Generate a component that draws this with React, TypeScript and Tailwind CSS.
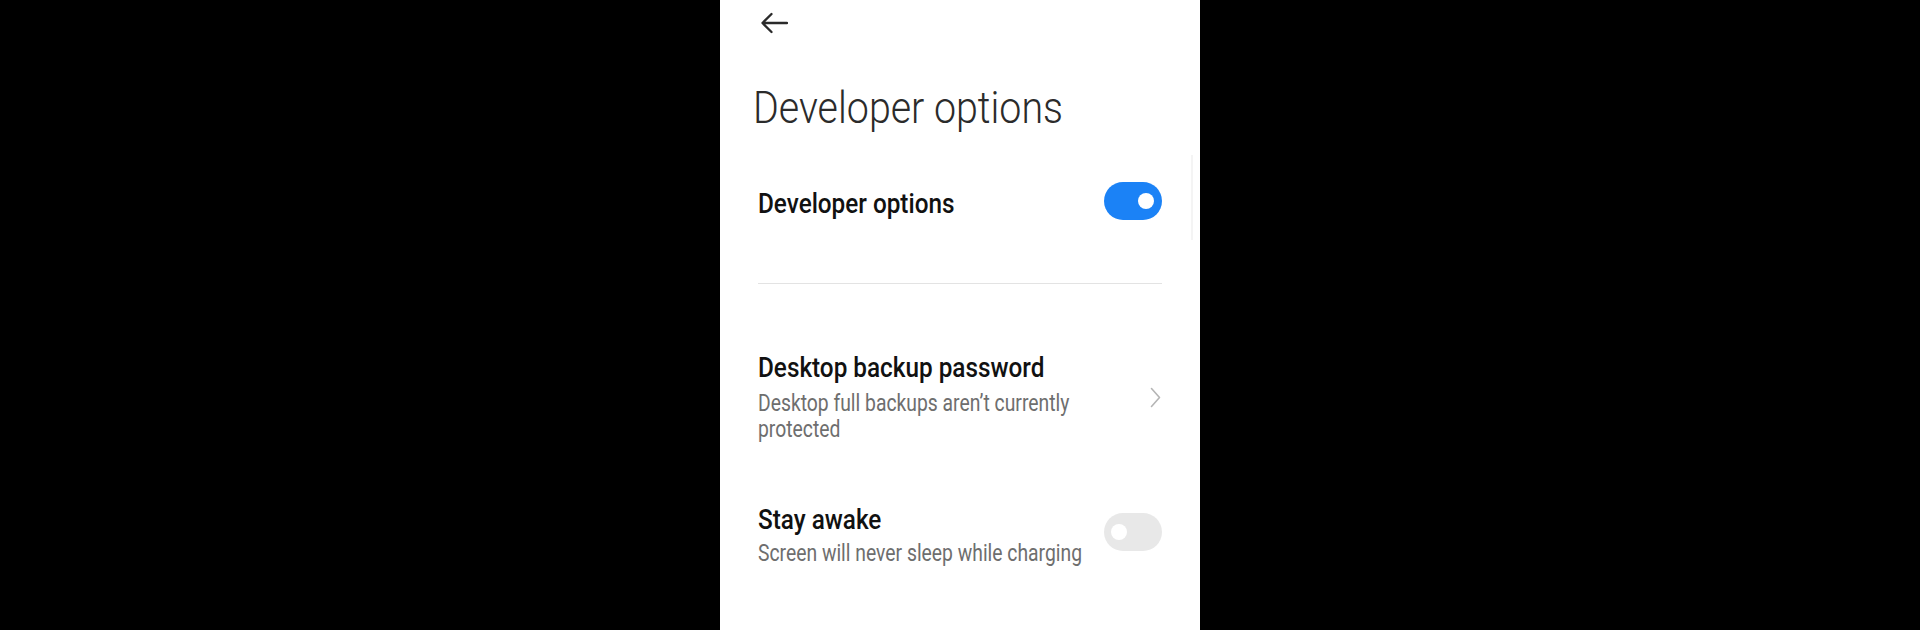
import React from 'react'

const FONT = { fontFamily: 'Roboto, "Noto Sans", sans-serif' }

// text in the screenshot is squeezed horizontally, so narrow it the same way
function T({ children, className = 'scale-x-[0.84]' }: { children: React.ReactNode; className?: string }) {
  return <span className={'inline-block origin-left whitespace-nowrap ' + className}>{children}</span>
}

function Toggle({ on }: { on: boolean }) {
  return (
    <div
      className={
        'relative h-[38px] w-[58px] shrink-0 rounded-full ' + (on ? 'bg-[#1b82f6]' : 'bg-[#e8e8e8]')
      }
    >
      <div
        className={
          'absolute top-[11px] h-[16px] w-[16px] rounded-full bg-white ' + (on ? 'left-[34px]' : 'left-[7px]')
        }
      />
    </div>
  )
}

function BackArrow() {
  return (
    <svg width="28" height="22" viewBox="0 0 28 22" fill="none">
      <path d="M27 11H2.5M11.5 2 2.5 11l9 9" stroke="#2a2a2a" strokeWidth="2.3" strokeLinecap="round" strokeLinejoin="round" />
    </svg>
  )
}

function Chevron() {
  return (
    <svg width="11" height="21" viewBox="0 0 11 21" fill="none">
      <path d="M1.5 1.5 9.5 10.5 1.5 19.5" stroke="#b5b5b5" strokeWidth="1.6" strokeLinecap="round" strokeLinejoin="round" />
    </svg>
  )
}

export default function App() {
  return (
    <div className="flex h-[630px] w-full justify-center overflow-hidden bg-black" style={FONT}>
      <div className="relative h-[630px] w-[480px] overflow-hidden bg-white px-[38px] pt-[12px]">
        {/* overlay scrollbar hint */}
        <div className="absolute right-[7px] top-[155px] h-[85px] w-[2px] bg-[#f4f4f4]" />

        <div className="ml-[2px] h-[22px]">
          <BackArrow />
        </div>

        <h1 className="-ml-[5px] mt-[51px] text-[45px] font-light leading-[45px] text-[#2b2b2b]">
          <T className="scale-x-[0.875]">Developer options</T>
        </h1>

        {/* master switch */}
        <div className="mt-[52px] flex items-start justify-between">
          <div className="mt-[6px] min-w-0 flex-1 text-[27px] font-medium leading-[32px] text-[#111]">
            <T className="scale-x-90">Developer options</T>
          </div>
          <Toggle on />
        </div>

        <div className="mt-[63px] h-px bg-[#e3e3e3]" />

        {/* desktop backup password */}
        <div className="mt-[68px] flex items-center justify-between">
          <div className="min-w-0 flex-1">
            <div className="text-[27px] font-medium leading-[32px] text-[#111]">
              <T className="scale-x-90">Desktop backup password</T>
            </div>
            <div className="mt-[7px] text-[23px] leading-[26px] text-[#6e6e6e]">
              <T>Desktop full backups aren’t currently</T>
              <br />
              <T>protected</T>
            </div>
          </div>
          <div className="mr-[1px] shrink-0">
            <Chevron />
          </div>
        </div>

        {/* stay awake */}
        <div className="mt-[61px] flex items-start justify-between">
          <div className="min-w-0 flex-1">
            <div className="text-[27px] font-medium leading-[32px] text-[#111]">
              <T className="scale-x-90">Stay awake</T>
            </div>
            <div className="mt-[5px] text-[23px] leading-[26px] text-[#6e6e6e]">
              <T>Screen will never sleep while charging</T>
            </div>
          </div>
          <div className="mt-[9px] shrink-0">
            <Toggle on={false} />
          </div>
        </div>

        {/* next row, mostly below the fold */}
        <div className="mt-[59px] text-[27px] font-medium leading-[32px] text-[#111]">
          <T className="scale-x-90">Enable Bluetooth HCI snoop log</T>
        </div>
      </div>
    </div>
  )
}
